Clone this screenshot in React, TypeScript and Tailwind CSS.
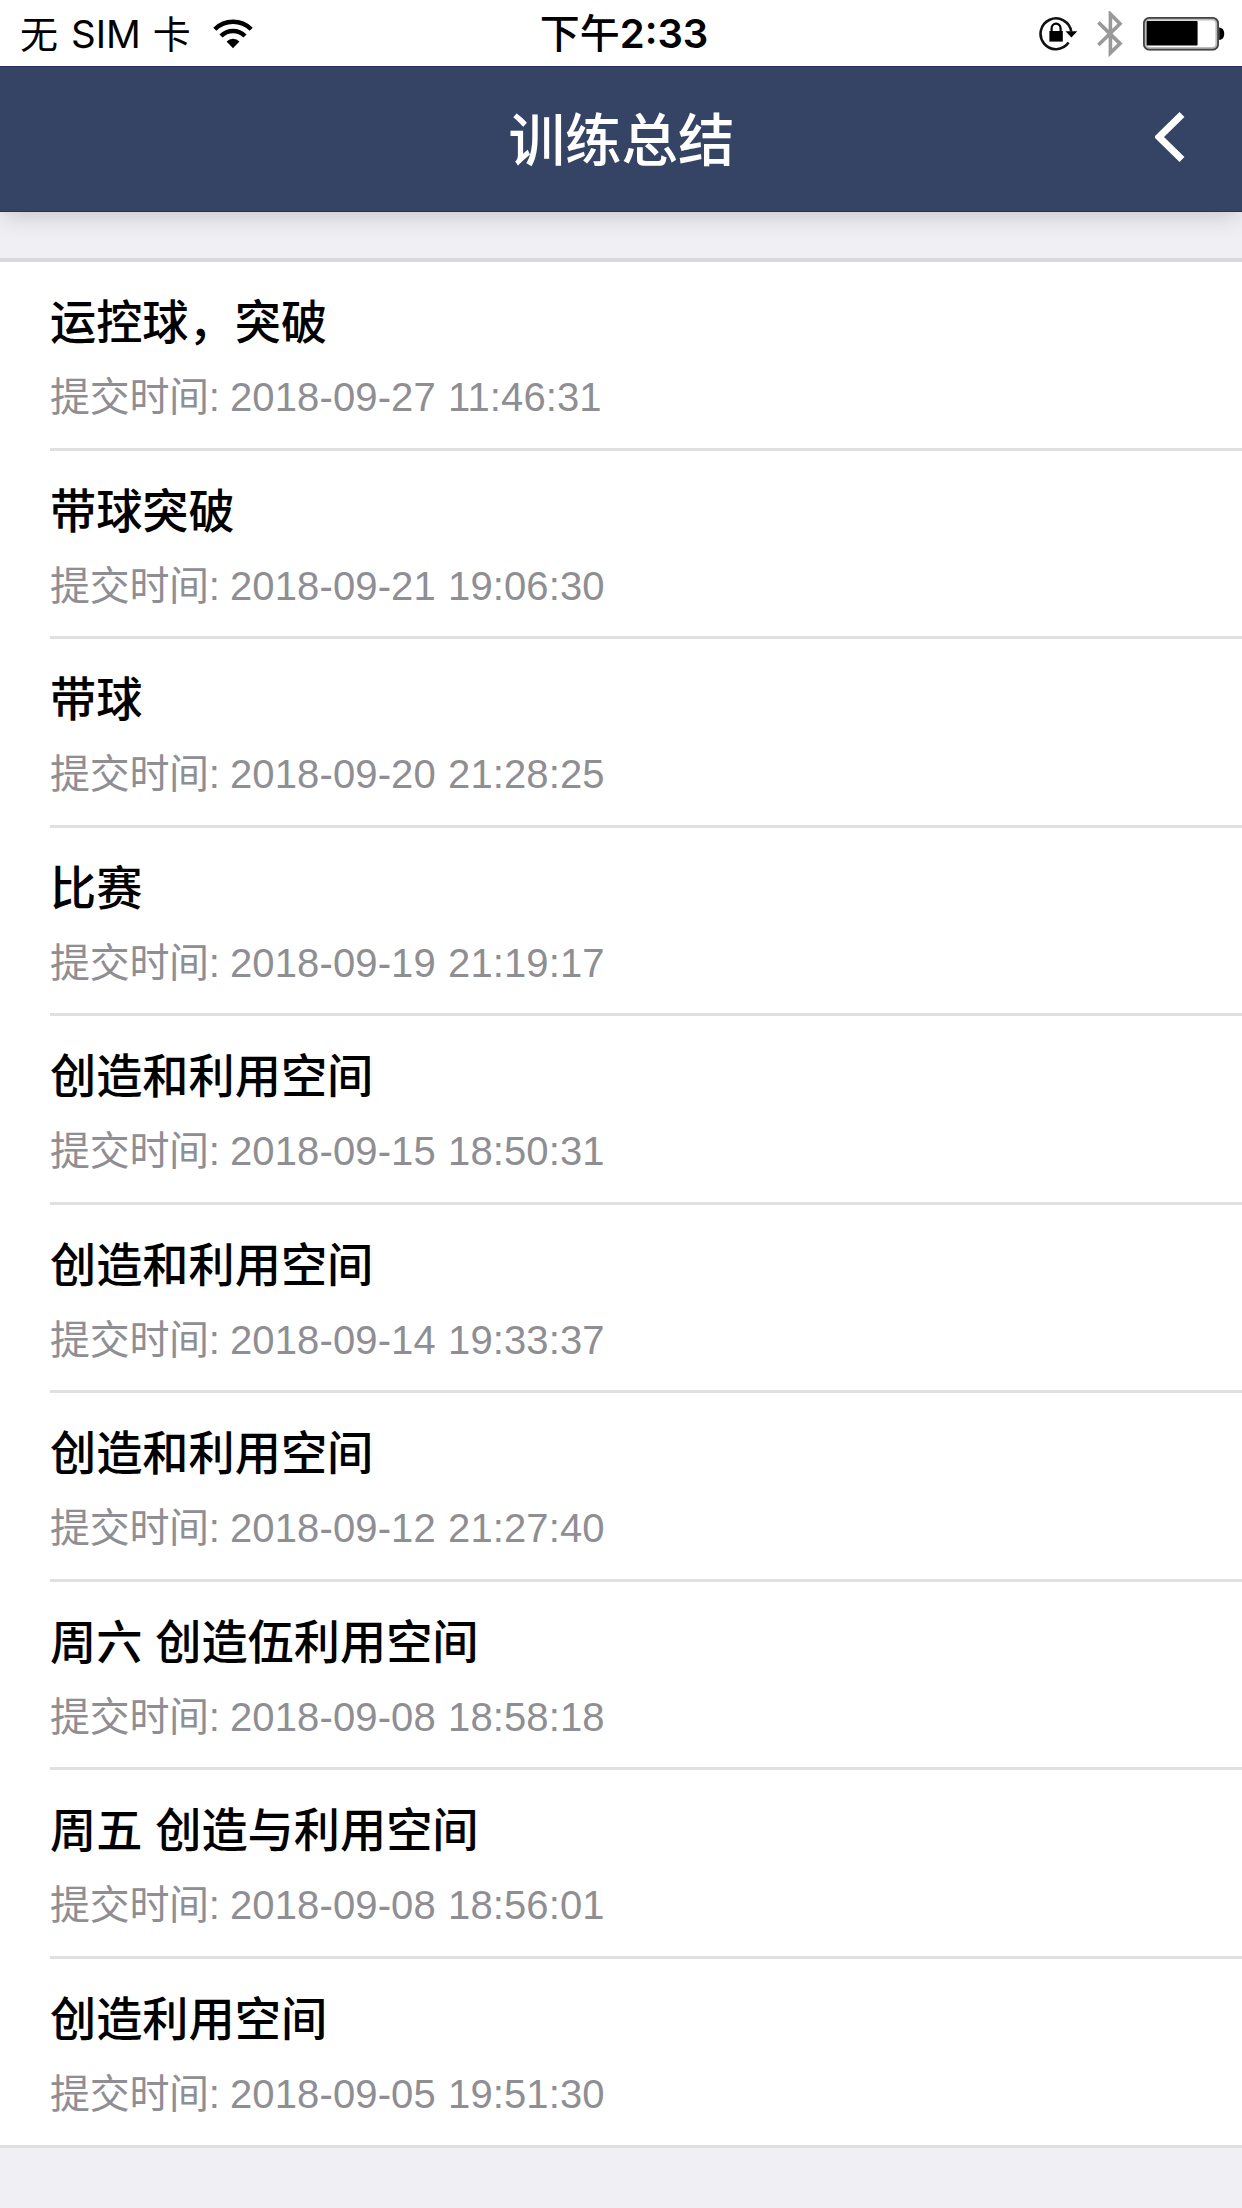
import React from 'react';

interface Training {
  title: string;
  submittedAt: string;
}

const trainings: Training[] = [
  { title: '运控球，突破', submittedAt: '2018-09-27 11:46:31' },
  { title: '带球突破', submittedAt: '2018-09-21 19:06:30' },
  { title: '带球', submittedAt: '2018-09-20 21:28:25' },
  { title: '比赛', submittedAt: '2018-09-19 21:19:17' },
  { title: '创造和利用空间', submittedAt: '2018-09-15 18:50:31' },
  { title: '创造和利用空间', submittedAt: '2018-09-14 19:33:37' },
  { title: '创造和利用空间', submittedAt: '2018-09-12 21:27:40' },
  { title: '周六 创造伍利用空间', submittedAt: '2018-09-08 18:58:18' },
  { title: '周五 创造与利用空间', submittedAt: '2018-09-08 18:56:01' },
  { title: '创造利用空间', submittedAt: '2018-09-05 19:51:30' },
];

const WifiIcon = () => (
  <svg className="w-[40px] h-[30px]" viewBox="0 0 40 30">
    <path d="M1.8 10.2a26 26 0 0 1 36.4 0" fill="none" stroke="#000" strokeWidth="4.4" />
    <path d="M8 17a17 17 0 0 1 24 0" fill="none" stroke="#000" strokeWidth="4.4" />
    <path d="M13.6 22.4a9 9 0 0 1 12.8 0L20 29.3z" fill="#000" />
  </svg>
);

const RotationLockIcon = () => (
  <svg className="w-[40px] h-[36px]" viewBox="0 0 40 36">
    <path d="M33.2 15.5A15.4 15.4 0 1 0 30.6 26.6" fill="none" stroke="#111" strokeWidth="2.6" />
    <path d="M27.5 15.2h11.8l-5.9 6.4z" fill="#000" />
    <path d="M13.6 16v-3.6a4.500 4.800 0 0 1 9 0V16" fill="none" stroke="#000" strokeWidth="2.2" />
    <rect x="11.4" y="15" width="13.4" height="10.6" fill="#000" />
  </svg>
);

const BluetoothIcon = () => (
  <svg className="w-[26px] h-[46px]" viewBox="0 0 26 46">
    <path
      d="M1.4 11.4L23 32.6 13.4 42V3l9.6 9.8L1.4 34"
      fill="none"
      stroke="#999"
      strokeWidth="3.6"
    />
  </svg>
);

const BatteryIcon = () => (
  <svg className="w-[82px] h-[34px]" viewBox="0 0 82 34">
    <rect x="1.8" y="1.8" width="72.4" height="30" rx="5" fill="#fff" stroke="#bbb" strokeWidth="3.6" />
    <rect x="0.9" y="0.9" width="74.2" height="31.8" rx="5.5" fill="none" stroke="#444" strokeWidth="1.8" />
    <rect x="3.6" y="4" width="51" height="24.6" rx="1" fill="#000" />
    <path d="M76.2 10.6c3.6.4 5 3 5 6.2s-1.4 5.8-5 6.2z" fill="#000" />
  </svg>
);

const StatusBar = () => (
  <div className="relative z-10 grid grid-cols-3 items-center h-[66px] pl-5 pr-[17px] bg-white text-black font-['Inter','Noto_Sans_CJK_SC',sans-serif]">
    <div className="flex items-center pt-[2px]">
      <span className="text-[38px] leading-[64px] whitespace-nowrap">无</span>
      <span className="ml-[13px] text-[38.5px] leading-[64px]">SIM</span>
      <span className="ml-[12px] text-[38px] leading-[64px]">卡</span>
      <span className="ml-[22px]">
        <WifiIcon />
      </span>
    </div>
    <div className="flex justify-center pt-[2px] pl-[3px] leading-[64px]">
      <span className="text-[40px] font-medium">下午</span>
      <span className="text-[40px] font-semibold">2:33</span>
    </div>
    <div className="flex items-center justify-end pt-px">
      <RotationLockIcon />
      <span className="ml-[19px]">
        <BluetoothIcon />
      </span>
      <span className="ml-[20px]">
        <BatteryIcon />
      </span>
    </div>
  </div>
);

const Header = () => (
  <header className="grid grid-cols-[1fr_auto_1fr] items-center h-[146px] bg-[#354365] border-y border-[#26345c] text-white shadow-[0_5px_24px_-3px_rgba(0,0,0,0.2)]">
    <span />
    <h1 className="pt-[5px] pl-px text-[56.5px] leading-[80px] font-medium">训练总结</h1>
    <button type="button" className="justify-self-end mr-[57px] pb-[4px]">
      <svg className="w-[30px] h-[50px]" viewBox="0 0 30 50">
        <path d="M27 2.6L4 25l23 22.4" fill="none" stroke="#fff" strokeWidth="7" />
      </svg>
    </button>
  </header>
);

const TrainingRow: React.FC<Training & { last: boolean }> = ({ title, submittedAt, last }) => (
  <li className={last ? 'h-[186px]' : 'h-[188.55px] ml-[50px] border-b-3 border-[#e0e0e1]'}>
    <div className={last ? 'pl-[50px] pt-[31px]' : 'pt-[31px]'}>
      <h2 className="text-[46.2px] leading-[60px] font-medium text-black">{title}</h2>
      <p className="flex mt-[18px] text-[40px] leading-[52px] text-[#8e8e93]">
        <span className="w-[180px] tracking-[-0.3px]">提交时间:</span>
        <span className="tracking-[0.12px] [word-spacing:1px]">{submittedAt}</span>
      </p>
    </div>
  </li>
);

export default function App() {
  return (
    <div className="w-[1242px] h-[2208px] overflow-hidden bg-[#efeff4] font-['Liberation_Sans','Noto_Sans_CJK_SC',sans-serif]">
      <StatusBar />
      <Header />
      <ul className="mt-[46px] bg-white border-t-4 border-b-3 border-t-[#d9d8dd] border-b-[#dfdfe1]">
        {trainings.map((item, index) => (
          <TrainingRow key={index} {...item} last={index === trainings.length - 1} />
        ))}
      </ul>
    </div>
  );
}
